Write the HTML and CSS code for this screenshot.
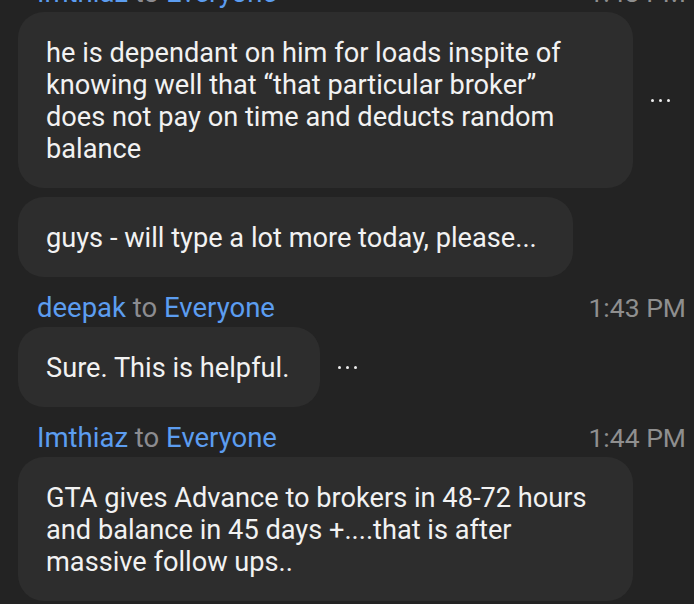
FILE: index.html
```html
<!DOCTYPE html>
<html lang="en">
<head>
<meta charset="utf-8">
<title>Chat</title>
<link rel="stylesheet" href="styles.css">
</head>
<body>
<div class="viewport">
  <div class="thread">
    <div class="group">
      <div class="header">
        <span class="names"><span class="name">Imthiaz</span> <span class="to">to</span> <span class="name">Everyone</span></span>
        <span class="time">1:43 PM</span>
      </div>
      <div class="row">
        <div class="bubble bubble-wide">he is dependant on him for loads inspite of<br>knowing well that “that particular broker”<br>does not pay on time and deducts random<br>balance</div>
        <div class="more"><i></i><i></i><i></i></div>
      </div>
      <div class="row">
        <div class="bubble bubble-mid">guys - will type a lot more today, please...</div>
      </div>
    </div>
    <div class="group">
      <div class="header">
        <span class="names"><span class="name">deepak</span> <span class="to">to</span> <span class="name">Everyone</span></span>
        <span class="time">1:43 PM</span>
      </div>
      <div class="row">
        <div class="bubble bubble-short">Sure. This is helpful.</div>
        <div class="more"><i></i><i></i><i></i></div>
      </div>
    </div>
    <div class="group">
      <div class="header">
        <span class="names"><span class="name">Imthiaz</span> <span class="to">to</span> <span class="name">Everyone</span></span>
        <span class="time">1:44 PM</span>
      </div>
      <div class="row">
        <div class="bubble bubble-wide">GTA gives Advance to brokers in 48-72 hours<br>and balance in 45 days +....that is after<br>massive follow ups..</div>
      </div>
    </div>
  </div>
</div>
</body>
</html>
```
FILE: styles.css
```css
* { box-sizing: border-box; }
html, body {
  margin: 0;
  padding: 0;
  background: #232323;
}
body {
  font-family: Roboto, "Noto Sans", "Liberation Sans", sans-serif;
  color: #f2f2f2;
  font-size: 27.2px;
}
.viewport {
  width: 694px;
  height: 604px;
  overflow: hidden;
}
.thread {
  margin-top: -23px;
  padding: 0 8px 0 18px;
  display: flex;
  flex-direction: column;
}
.group {
  display: flex;
  flex-direction: column;
  gap: 9px;
}
.group + .group { margin-top: 15px; }
.header {
  display: flex;
  justify-content: space-between;
  align-items: center;
  height: 32px;
  line-height: 32px;
  padding-left: 19px;
  margin-bottom: -6px;
  font-size: 27.5px;
}
.name { color: #5c9df0; }
.to { color: #8c8c90; }
.time { color: #8f8f8f; font-size: 26.5px; }
.row {
  display: flex;
  align-items: center;
  gap: 18px;
}
.bubble {
  background: #2d2d2d;
  border-radius: 26px;
  padding: 25px 26px 23px 28px;
  line-height: 32px;
  white-space: nowrap;
}
.bubble-wide { width: 615px; }
.bubble-mid { width: 555px; }
.bubble-short { padding-right: 31px; }
.more {
  display: flex;
  gap: 5px;
}
.more i {
  display: block;
  width: 3px;
  height: 3px;
  border-radius: 50%;
  background: #ededed;
}
```
